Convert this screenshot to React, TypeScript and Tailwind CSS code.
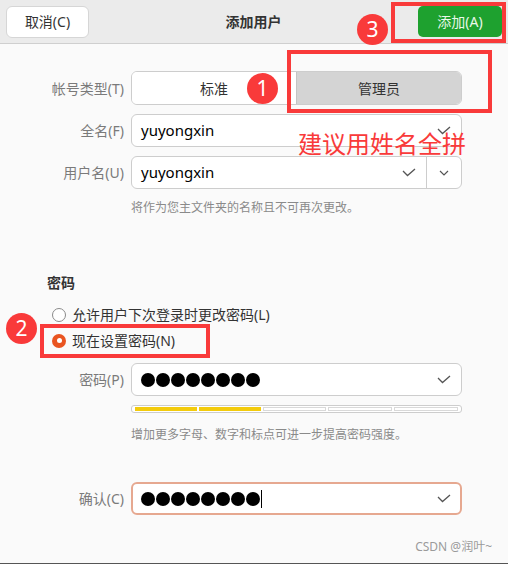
import { ReactNode } from "react";

const CheckMark = ({ className = "" }: { className?: string }) => (
  <svg width="14" height="9" viewBox="0 0 14 9" className={className}>
    <polyline points="1,3 5.5,7.5 13,1" fill="none" stroke="#555" strokeWidth="1.3" />
  </svg>
);

const Chevron = () => (
  <svg width="10" height="6" viewBox="0 0 10 6">
    <polyline points="1,1 5,5 9,1" fill="none" stroke="#555" strokeWidth="1.2" />
  </svg>
);

const Badge = ({ n, className }: { n: string; className: string }) => (
  <div
    className={`absolute w-[31px] h-[31px] rounded-full bg-[#f93a3a] text-white text-[21px] leading-none flex items-center justify-center ${className}`}
  >
    {n}
  </div>
);

const Row = ({ label, children, className = "" }: { label: string; children: ReactNode; className?: string }) => (
  <div className={`flex items-center gap-[7px] ${className}`}>
    <div className="w-[124px] text-right text-[14px] text-[#7a7a7a]">{label}</div>
    {children}
  </div>
);

const Dots = () => (
  <div className="flex gap-[1px]">
    {Array.from({ length: 8 }).map((_, i) => (
      <span key={i} className="w-[14px] h-[14px] rounded-full bg-black" />
    ))}
  </div>
);

const segs = [true, true, false, false, false];

export default function App() {
  return (
    <div
      className="relative w-[508px] h-[564px] overflow-hidden bg-[#fafafa] border-b border-[#555]"
      style={{ fontFamily: '"Noto Sans", "Noto Sans CJK SC", sans-serif' }}
    >
      {/* header */}
      <div className="flex items-center h-[44px] px-[6px] bg-[#ebebeb] border-b border-[#cfcfcf]">
        <button className="w-[83px] h-[32px] rounded-[6px] bg-white border border-[#d6d6d6] text-[14px] text-[#333]">
          取消(C)
        </button>
        <div className="flex-1 text-center text-[14px] font-bold text-[#333]">添加用户</div>
        <button className="w-[84px] h-[31px] rounded-[5px] bg-[#1ea12f] text-[14px] text-[#eaf7ea]">
          添加(A)
        </button>
      </div>

      {/* form */}
      <div className="flex flex-col pt-[27px]">
        <Row label="帐号类型(T)">
          <div className="flex w-[331px] h-[34px] rounded-[6px] border border-[#cdcdcd] overflow-hidden text-[14px] text-[#333]">
            <div className="flex-1 flex items-center justify-center bg-white">标准</div>
            <div className="flex-1 flex items-center justify-center bg-[#d4d4d4] border-l border-[#c4c4c4]">管理员</div>
          </div>
        </Row>

        <Row label="全名(F)" className="mt-[9px]">
          <div className="flex items-center w-[331px] h-[33px] rounded-[6px] border border-[#cdcdcd] bg-white pl-[9px] pr-[10px]">
            <span className="flex-1 text-[15px] text-black">yuyongxin</span>
            <CheckMark />
          </div>
        </Row>

        <Row label="用户名(U)" className="mt-[9px]">
          <div className="flex items-center w-[331px] h-[33px] rounded-[6px] border border-[#cdcdcd] bg-white pl-[9px]">
            <span className="flex-1 text-[15px] text-black">yuyongxin</span>
            <CheckMark className="mr-[10px]" />
            <div className="w-[35px] h-full border-l border-[#cdcdcd] flex items-center justify-center">
              <Chevron />
            </div>
          </div>
        </Row>

        <div className="ml-[131px] mt-[10px] text-[12px] text-[#8a8a8a]">将作为您主文件夹的名称且不可再次更改。</div>

        <div className="ml-[47px] mt-[55px] text-[14px] font-bold text-[#333]">密码</div>

        <div className="ml-[52px] mt-[11px] flex items-center gap-[6px] text-[14px] text-[#333]">
          <span className="w-[14px] h-[14px] rounded-full border border-[#8a8a8a] bg-white" />
          允许用户下次登录时更改密码(L)
        </div>
        <div className="ml-[52px] mt-[5px] flex items-center gap-[6px] text-[14px] text-[#333]">
          <span className="w-[14px] h-[14px] rounded-full bg-[#e95420] flex items-center justify-center">
            <span className="w-[5px] h-[5px] rounded-full bg-white" />
          </span>
          现在设置密码(N)
        </div>

        <Row label="密码(P)" className="mt-[12px]">
          <div className="flex items-center w-[331px] h-[33px] rounded-[6px] border border-[#cdcdcd] bg-white pl-[9px] pr-[10px]">
            <div className="flex-1"><Dots /></div>
            <CheckMark />
          </div>
        </Row>

        <div className="ml-[131px] mt-[9px] w-[331px] h-[8px] rounded-[3px] border border-[#cdcdcd] bg-white flex items-center gap-[2px] px-[3px]">
          {segs.map((on, i) => (
            <div key={i} className={`flex-1 h-[4px] ${on ? "bg-[#f3cb0c]" : "border border-[#d9d9d9]"}`} />
          ))}
        </div>

        <div className="ml-[131px] mt-[13px] text-[12px] text-[#8a8a8a]">增加更多字母、数字和标点可进一步提高密码强度。</div>

        <Row label="确认(C)" className="mt-[38px]">
          <div className="flex items-center w-[331px] h-[33px] rounded-[6px] border-2 border-[#e6a890] bg-white pl-[8px] pr-[9px]">
            <div className="flex-1 flex items-center">
              <Dots />
              <span className="ml-[1px] w-[1px] h-[18px] bg-black" />
            </div>
            <CheckMark />
          </div>
        </Row>
      </div>

      <div className="absolute right-[16px] bottom-[7px] text-[12px] text-[#9a9a9a]">CSDN @润叶~</div>

      {/* annotations */}
      <div className="absolute left-[391px] top-[2px] w-[115px] h-[41px] border-[4px] border-[#f93a3a]" />
      <Badge n="3" className="left-[357px] top-[14px]" />
      <div className="absolute left-[287px] top-[50px] w-[205px] h-[63px] border-[4px] border-[#f93a3a]" />
      <Badge n="1" className="left-[247px] top-[73px]" />
      <div className="absolute left-[298px] top-[128px] text-[24px] leading-[32px] text-[#f93a3a]">建议用姓名全拼</div>
      <div className="absolute left-[40px] top-[324px] w-[170px] h-[34px] border-[4px] border-[#f93a3a]" />
      <Badge n="2" className="left-[6px] top-[313px]" />
    </div>
  );
}
